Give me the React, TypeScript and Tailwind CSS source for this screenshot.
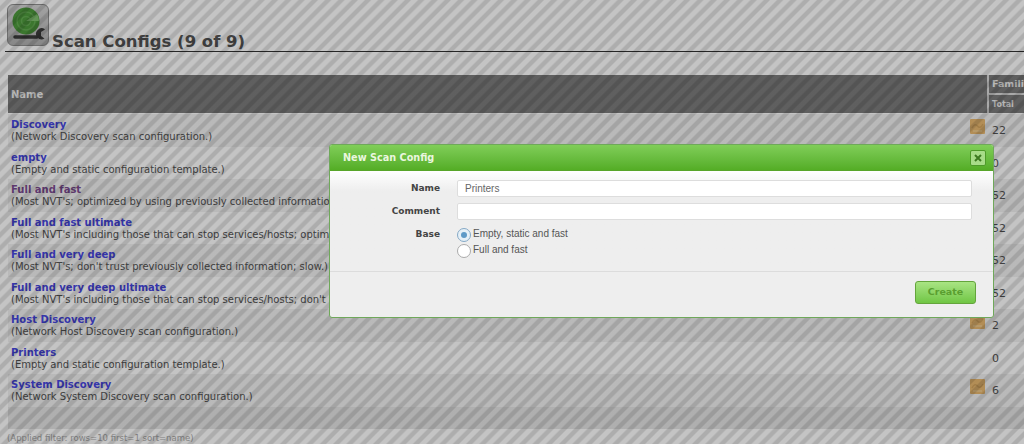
const configs = [
  { name: "Discovery", comment: "(Network Discovery scan configuration.)", total: "22", shared: true },
  { name: "empty", comment: "(Empty and static configuration template.)", total: "0" },
  { name: "Full and fast", comment: "(Most NVT's; optimized by using previously collected information.)", total: "52", visited: true },
  { name: "Full and fast ultimate", comment: "(Most NVT's including those that can stop services/hosts; optimized by using previously collected information.)", total: "52" },
  { name: "Full and very deep", comment: "(Most NVT's; don't trust previously collected information; slow.)", total: "52" },
  { name: "Full and very deep ultimate", comment: "(Most NVT's including those that can stop services/hosts; don't trust previously collected information; slow.)", total: "52" },
  { name: "Host Discovery", comment: "(Network Host Discovery scan configuration.)", total: "2", shared: true },
  { name: "Printers", comment: "(Empty and static configuration template.)", total: "0" },
  { name: "System Discovery", comment: "(Network System Discovery scan configuration.)", total: "6", shared: true },
];

function RadarIcon() {
  return (
    <div className="flex h-[42px] w-[42px] shrink-0 items-center justify-center rounded-[6px] border border-[#8f8f8f] bg-gradient-to-b from-[#d4d4d4] to-[#b0b0b0]">
      <svg width="38" height="38" viewBox="0 0 38 38">
        <circle cx="17" cy="15" r="13.5" fill="#4d9a3c" />
        <circle cx="17" cy="15" r="9" fill="none" stroke="#63ab52" strokeWidth="1.5" />
        <circle cx="17" cy="15" r="4.5" fill="none" stroke="#63ab52" strokeWidth="1.5" />
        <path d="M17 15 L28 8 A13 13 0 0 1 30 15 Z" fill="#7fc06e" />
        <path d="M6 31 H28" stroke="#3a3a3a" strokeWidth="3.5" strokeLinecap="round" />
        <path d="M36 23.5 A5.5 5.5 0 1 0 35.5 32.5 L32 30 L32 26 Z" fill="#3a3a3a" />
      </svg>
    </div>
  );
}

function ShareIcon() {
  return (
    <svg width="15" height="15" viewBox="0 0 15 15" className="block">
      <rect width="15" height="15" rx="1" fill="#e8b870" />
      <path d="M2 9 C4 5 6 5 7.5 7 C9 9 11 9 13 5" fill="none" stroke="#d3a45f" strokeWidth="1.5" />
      <path d="M3 12 H12" stroke="#f2d6a0" strokeWidth="1" />
    </svg>
  );
}

function ConfigRow({ config, dark }: { config: (typeof configs)[number]; dark: boolean }) {
  return (
    <div className={`flex h-[32.5px] ${dark ? "bg-[#f1f1f1]" : "bg-white"}`}>
      <div className="flex w-[979px] shrink-0 justify-between pl-[3px] pr-[2px] pt-[5px]">
        <div className="min-w-0">
          <div className={`text-[10px] font-bold leading-[12px] ${config.visited ? "text-[#7a4a90]" : "text-[#4646e0]"}`}>
            {config.name}
          </div>
          <div className="whitespace-nowrap text-[10px] leading-[12px] text-[#555]">{config.comment}</div>
        </div>
        {config.shared && (
          <div>
            <ShareIcon />
          </div>
        )}
      </div>
      <div className="pl-[5px] pt-[10px] text-[11px] leading-[13px] text-[#555]">{config.total}</div>
    </div>
  );
}

function NewConfigDialog() {
  return (
    <div className="absolute left-[329px] top-[144px] h-[174px] w-[665px] overflow-hidden rounded-[3px] border border-[#6fa85a] bg-[#eeeeee] text-[#444]">
      <div className="flex h-[26px] items-center justify-between border-b border-[#58a52a] bg-gradient-to-b from-[#80ce58] to-[#54ad25] pl-[13px] pr-[7px] pt-[1px]">
        <span className="text-[9.7px] font-bold text-[#eaf6df]">New Scan Config</span>
        <button className="flex h-[16px] w-[16px] items-center justify-center rounded-[2px] border border-[#4e9a29] bg-[#a8dc88]">
          <svg width="8" height="8" viewBox="0 0 8 8">
            <path d="M1 1 L7 7 M7 1 L1 7" stroke="#3d7a20" strokeWidth="2" />
          </svg>
        </button>
      </div>
      <div className="h-[101px] border-b border-[#dcdcdc] bg-gradient-to-b from-white to-[#eeeeee] to-[20%] pt-[9px]">
        <div className="flex h-[23px] items-start">
          <label className="w-[110px] pt-[2px] text-right text-[9px] font-bold leading-[13px]">Name</label>
          <input
            readOnly
            value="Printers"
            className="ml-[17px] h-[17px] w-[515px] rounded-[2px] border border-[#dddddd] bg-white px-[7px] font-['Liberation_Sans',sans-serif] text-[10px] text-[#666] outline-none"
          />
        </div>
        <div className="flex h-[23px] items-start">
          <label className="w-[110px] pt-[2px] text-right text-[9px] font-bold leading-[13px]">Comment</label>
          <input
            readOnly
            className="ml-[17px] h-[17px] w-[515px] rounded-[2px] border border-[#dddddd] bg-white px-[7px] text-[10px] outline-none"
          />
        </div>
        <div className="flex items-start">
          <label className="w-[110px] pt-[2px] text-right text-[9px] font-bold leading-[13px]">Base</label>
          <div className="ml-[17px] flex flex-col font-['Liberation_Sans',sans-serif] text-[10px] text-[#555]">
            <div className="flex h-[16px] items-start gap-[2px]">
              <span className="mt-[2px] flex h-[14px] w-[14px] items-center justify-center rounded-full border border-[#85a9c6] bg-[#e6f0f7]">
                <span className="h-[6px] w-[6px] rounded-full bg-[#5f9ac7]" />
              </span>
              <span className="mt-[2px] leading-[11px]">Empty, static and fast</span>
            </div>
            <div className="flex h-[16px] items-start gap-[2px]">
              <span className="mt-[2px] h-[14px] w-[14px] rounded-full border border-[#aaaaaa] bg-white" />
              <span className="mt-[2px] leading-[11px]">Full and fast</span>
            </div>
          </div>
        </div>
      </div>
      <div className="flex justify-end pr-[17px] pt-[9px]">
        <button className="flex h-[23px] w-[61px] items-center justify-center rounded-[3px] border border-[#64a53c] bg-gradient-to-b from-[#a9e483] to-[#70c644] text-[9.5px] font-bold text-[#5a9e30]">
          Create
        </button>
      </div>
    </div>
  );
}

export default function App() {
  return (
    <div className="relative h-[444px] w-[1024px] overflow-hidden bg-white font-['DejaVu_Sans',sans-serif]">
      {/* Page heading */}
      <div className="ml-[5px] flex h-[52px] items-end border-b border-[#333] pl-[2px]">
        <div className="mb-[5px]">
          <RadarIcon />
        </div>
        <h1 className="ml-[3px] text-[16.5px] font-bold leading-[19px] text-[#555]">Scan Configs (9 of 9)</h1>
      </div>

      {/* Table */}
      <div className="ml-[8px] mt-[23px] w-[1100px]">
        <div className="flex h-[38px] bg-[#7c7c7c] text-[#eee]">
          <div className="flex w-[979px] shrink-0 items-center pl-[3px] text-[10px] font-bold">Name</div>
          <div className="flex-1 border-l-2 border-[#dcdcdc]">
            <div className="flex h-[20px] items-center border-b-2 border-[#dcdcdc] pl-[3px] text-[9.5px] font-bold">Families</div>
            <div className="flex h-[18px] items-center pl-[3px] pt-[1px] text-[8px] font-bold">Total</div>
          </div>
        </div>
        <div className="h-[1px] bg-white" />
        {configs.map((config, i) => (
          <ConfigRow key={config.name} config={config} dark={i % 2 === 0} />
        ))}
        <div className="h-[22px] bg-[#e4e4e4]" />
      </div>
      <div className="ml-[7px] mt-[4px] text-[8.5px] leading-[11px] text-[#aaa]">(Applied filter: rows=10 first=1 sort=name)</div>

      {/* Modal overlay stripes */}
      <div className="absolute inset-0 bg-[repeating-linear-gradient(135deg,rgba(0,0,0,0.23)_0px,rgba(0,0,0,0.23)_3.5px,rgba(0,0,0,0.32)_5px,rgba(0,0,0,0.32)_8px,rgba(0,0,0,0.23)_9.4px)]" />

      <NewConfigDialog />
    </div>
  );
}
